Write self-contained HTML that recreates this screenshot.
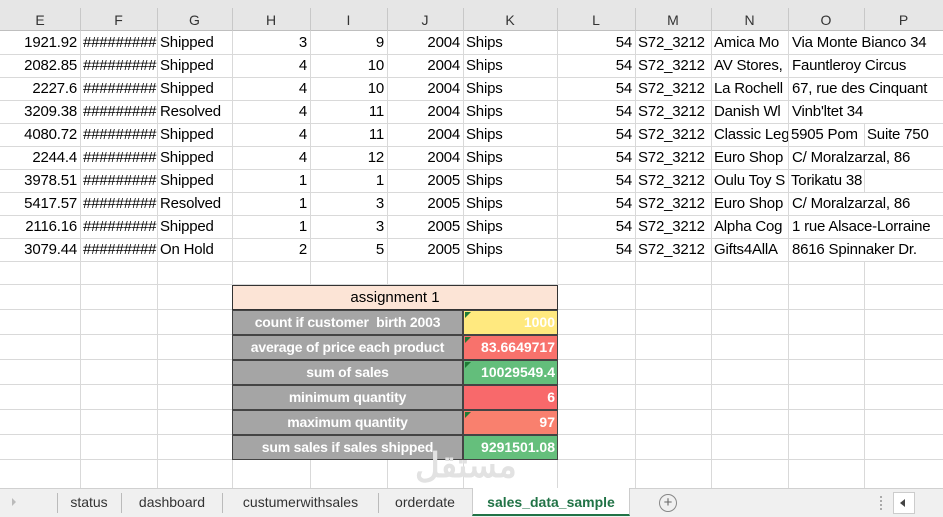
<!DOCTYPE html>
<html><head><meta charset="utf-8"><style>
*{margin:0;padding:0;box-sizing:border-box}
body{width:943px;height:517px;overflow:hidden;background:#fff;font-family:"Liberation Sans",sans-serif;position:relative}
.hdr{position:absolute;left:0;top:0;width:943px;height:31px;background:#e6e6e6;border-bottom:1px solid #bfbfbf}
.hl{position:absolute;left:0;width:943px;height:1px;background:#d9d9d9}
.vl{position:absolute;top:0;width:1px;height:488px;background:#d9d9d9}
.vh{position:absolute;top:8px;width:1px;height:23px;background:#c8c8c8}
.c{position:absolute;font-size:15px;color:#000;height:23px;line-height:24px;white-space:nowrap;overflow:hidden;letter-spacing:-0.2px}
.w{background:#fff}
.r{text-align:right;padding-right:3px}
.l{padding-left:3px}
.h{position:absolute;top:10px;font-size:14px;color:#333;text-align:center;height:20px;line-height:20px}
.lab{position:absolute;left:232px;width:231px;height:25px;background:#a5a5a5;border:1px solid #444;color:#fff;font-weight:bold;font-size:14px;text-align:center;line-height:23px;white-space:nowrap;overflow:hidden;letter-spacing:-0.2px}
.val{position:absolute;left:463px;width:95px;height:25px;border:1px solid #444;color:#fff;font-weight:bold;font-size:14px;text-align:right;padding-right:2px;line-height:23px;overflow:hidden}
.tri{position:absolute;left:1px;top:1px;width:0;height:0;border-top:6px solid #1e7b34;border-right:6px solid transparent}
.tab{position:absolute;top:490px;height:26px;line-height:24px;font-size:14px;color:#333;text-align:center}
</style></head><body>
<div class="hdr"></div>
<div class="h" style="left:0;width:80px">E</div>
<div class="h" style="left:80px;width:77px">F</div>
<div class="h" style="left:157px;width:75px">G</div>
<div class="h" style="left:232px;width:78px">H</div>
<div class="h" style="left:310px;width:77px">I</div>
<div class="h" style="left:387px;width:76px">J</div>
<div class="h" style="left:463px;width:94px">K</div>
<div class="h" style="left:557px;width:78px">L</div>
<div class="h" style="left:635px;width:76px">M</div>
<div class="h" style="left:711px;width:77px">N</div>
<div class="h" style="left:788px;width:76px">O</div>
<div class="h" style="left:864px;width:79px">P</div>
<div class="vh" style="left:80px"></div><div class="vh" style="left:157px"></div><div class="vh" style="left:232px"></div><div class="vh" style="left:310px"></div><div class="vh" style="left:387px"></div><div class="vh" style="left:463px"></div><div class="vh" style="left:557px"></div><div class="vh" style="left:635px"></div><div class="vh" style="left:711px"></div><div class="vh" style="left:788px"></div><div class="vh" style="left:864px"></div>

<div class="vl" style="left:80px;top:31px;height:457px"></div><div class="vl" style="left:157px;top:31px;height:457px"></div><div class="vl" style="left:232px;top:31px;height:457px"></div><div class="vl" style="left:310px;top:31px;height:457px"></div><div class="vl" style="left:387px;top:31px;height:457px"></div><div class="vl" style="left:463px;top:31px;height:457px"></div><div class="vl" style="left:557px;top:31px;height:457px"></div><div class="vl" style="left:635px;top:31px;height:457px"></div><div class="vl" style="left:711px;top:31px;height:457px"></div><div class="vl" style="left:788px;top:31px;height:457px"></div><div class="vl" style="left:864px;top:31px;height:457px"></div>

<div class="hl" style="top:54px"></div><div class="hl" style="top:77px"></div><div class="hl" style="top:100px"></div><div class="hl" style="top:123px"></div><div class="hl" style="top:146px"></div><div class="hl" style="top:169px"></div><div class="hl" style="top:192px"></div><div class="hl" style="top:215px"></div><div class="hl" style="top:238px"></div><div class="hl" style="top:261px"></div><div class="hl" style="top:284px"></div><div class="hl" style="top:309px"></div><div class="hl" style="top:334px"></div><div class="hl" style="top:359px"></div><div class="hl" style="top:384px"></div><div class="hl" style="top:409px"></div><div class="hl" style="top:434px"></div><div class="hl" style="top:459px"></div>

<div style="position:absolute;left:0;top:31px">
<div class="c r" style="left:0;top:0;width:80px">1921.92</div><div class="c l" style="left:80px;top:0;width:77px">#########</div><div class="c l" style="left:157px;top:0;width:75px">Shipped</div><div class="c r" style="left:232px;top:0;width:78px">3</div><div class="c r" style="left:310px;top:0;width:77px">9</div><div class="c r" style="left:387px;top:0;width:76px">2004</div><div class="c l" style="left:463px;top:0;width:94px">Ships</div><div class="c r" style="left:557px;top:0;width:78px">54</div><div class="c l" style="left:635px;top:0;width:76px">S72_3212</div><div class="c l" style="left:711px;top:0;width:77px">Amica Mo</div><div class="c l w" style="left:789px;top:0;width:154px;height:23px">Via Monte Bianco 34</div>

<div class="c r" style="left:0;top:23px;width:80px">2082.85</div><div class="c l" style="left:80px;top:23px;width:77px">#########</div><div class="c l" style="left:157px;top:23px;width:75px">Shipped</div><div class="c r" style="left:232px;top:23px;width:78px">4</div><div class="c r" style="left:310px;top:23px;width:77px">10</div><div class="c r" style="left:387px;top:23px;width:76px">2004</div><div class="c l" style="left:463px;top:23px;width:94px">Ships</div><div class="c r" style="left:557px;top:23px;width:78px">54</div><div class="c l" style="left:635px;top:23px;width:76px">S72_3212</div><div class="c l" style="left:711px;top:23px;width:77px">AV Stores,</div><div class="c l w" style="left:789px;top:24px;width:154px;height:22px;line-height:22px">Fauntleroy Circus</div>

<div class="c r" style="left:0;top:46px;width:80px">2227.6</div><div class="c l" style="left:80px;top:46px;width:77px">#########</div><div class="c l" style="left:157px;top:46px;width:75px">Shipped</div><div class="c r" style="left:232px;top:46px;width:78px">4</div><div class="c r" style="left:310px;top:46px;width:77px">10</div><div class="c r" style="left:387px;top:46px;width:76px">2004</div><div class="c l" style="left:463px;top:46px;width:94px">Ships</div><div class="c r" style="left:557px;top:46px;width:78px">54</div><div class="c l" style="left:635px;top:46px;width:76px">S72_3212</div><div class="c l" style="left:711px;top:46px;width:77px">La Rochell</div><div class="c l w" style="left:789px;top:47px;width:154px;height:22px;line-height:22px">67, rue des Cinquant</div>

<div class="c r" style="left:0;top:69px;width:80px">3209.38</div><div class="c l" style="left:80px;top:69px;width:77px">#########</div><div class="c l" style="left:157px;top:69px;width:75px">Resolved</div><div class="c r" style="left:232px;top:69px;width:78px">4</div><div class="c r" style="left:310px;top:69px;width:77px">11</div><div class="c r" style="left:387px;top:69px;width:76px">2004</div><div class="c l" style="left:463px;top:69px;width:94px">Ships</div><div class="c r" style="left:557px;top:69px;width:78px">54</div><div class="c l" style="left:635px;top:69px;width:76px">S72_3212</div><div class="c l" style="left:711px;top:69px;width:77px">Danish Wl</div><div class="c l w" style="left:789px;top:70px;width:154px;height:22px;line-height:22px">Vinb'ltet 34</div>

<div class="c r" style="left:0;top:92px;width:80px">4080.72</div><div class="c l" style="left:80px;top:92px;width:77px">#########</div><div class="c l" style="left:157px;top:92px;width:75px">Shipped</div><div class="c r" style="left:232px;top:92px;width:78px">4</div><div class="c r" style="left:310px;top:92px;width:77px">11</div><div class="c r" style="left:387px;top:92px;width:76px">2004</div><div class="c l" style="left:463px;top:92px;width:94px">Ships</div><div class="c r" style="left:557px;top:92px;width:78px">54</div><div class="c l" style="left:635px;top:92px;width:76px">S72_3212</div><div class="c l" style="left:711px;top:92px;width:77px">Classic Leg</div><div class="c l" style="left:788px;top:92px;width:76px">5905 Pom</div><div class="c l" style="left:864px;top:92px;width:79px">Suite 750</div>

<div class="c r" style="left:0;top:115px;width:80px">2244.4</div><div class="c l" style="left:80px;top:115px;width:77px">#########</div><div class="c l" style="left:157px;top:115px;width:75px">Shipped</div><div class="c r" style="left:232px;top:115px;width:78px">4</div><div class="c r" style="left:310px;top:115px;width:77px">12</div><div class="c r" style="left:387px;top:115px;width:76px">2004</div><div class="c l" style="left:463px;top:115px;width:94px">Ships</div><div class="c r" style="left:557px;top:115px;width:78px">54</div><div class="c l" style="left:635px;top:115px;width:76px">S72_3212</div><div class="c l" style="left:711px;top:115px;width:77px">Euro Shop</div><div class="c l w" style="left:789px;top:116px;width:154px;height:22px;line-height:22px">C/ Moralzarzal, 86</div>

<div class="c r" style="left:0;top:138px;width:80px">3978.51</div><div class="c l" style="left:80px;top:138px;width:77px">#########</div><div class="c l" style="left:157px;top:138px;width:75px">Shipped</div><div class="c r" style="left:232px;top:138px;width:78px">1</div><div class="c r" style="left:310px;top:138px;width:77px">1</div><div class="c r" style="left:387px;top:138px;width:76px">2005</div><div class="c l" style="left:463px;top:138px;width:94px">Ships</div><div class="c r" style="left:557px;top:138px;width:78px">54</div><div class="c l" style="left:635px;top:138px;width:76px">S72_3212</div><div class="c l" style="left:711px;top:138px;width:77px">Oulu Toy S</div><div class="c l" style="left:788px;top:138px;width:76px">Torikatu 38</div>

<div class="c r" style="left:0;top:161px;width:80px">5417.57</div><div class="c l" style="left:80px;top:161px;width:77px">#########</div><div class="c l" style="left:157px;top:161px;width:75px">Resolved</div><div class="c r" style="left:232px;top:161px;width:78px">1</div><div class="c r" style="left:310px;top:161px;width:77px">3</div><div class="c r" style="left:387px;top:161px;width:76px">2005</div><div class="c l" style="left:463px;top:161px;width:94px">Ships</div><div class="c r" style="left:557px;top:161px;width:78px">54</div><div class="c l" style="left:635px;top:161px;width:76px">S72_3212</div><div class="c l" style="left:711px;top:161px;width:77px">Euro Shop</div><div class="c l w" style="left:789px;top:162px;width:154px;height:22px;line-height:22px">C/ Moralzarzal, 86</div>

<div class="c r" style="left:0;top:184px;width:80px">2116.16</div><div class="c l" style="left:80px;top:184px;width:77px">#########</div><div class="c l" style="left:157px;top:184px;width:75px">Shipped</div><div class="c r" style="left:232px;top:184px;width:78px">1</div><div class="c r" style="left:310px;top:184px;width:77px">3</div><div class="c r" style="left:387px;top:184px;width:76px">2005</div><div class="c l" style="left:463px;top:184px;width:94px">Ships</div><div class="c r" style="left:557px;top:184px;width:78px">54</div><div class="c l" style="left:635px;top:184px;width:76px">S72_3212</div><div class="c l" style="left:711px;top:184px;width:77px">Alpha Cog</div><div class="c l w" style="left:789px;top:185px;width:154px;height:22px;line-height:22px">1 rue Alsace-Lorraine</div>

<div class="c r" style="left:0;top:207px;width:80px">3079.44</div><div class="c l" style="left:80px;top:207px;width:77px">#########</div><div class="c l" style="left:157px;top:207px;width:75px">On Hold</div><div class="c r" style="left:232px;top:207px;width:78px">2</div><div class="c r" style="left:310px;top:207px;width:77px">5</div><div class="c r" style="left:387px;top:207px;width:76px">2005</div><div class="c l" style="left:463px;top:207px;width:94px">Ships</div><div class="c r" style="left:557px;top:207px;width:78px">54</div><div class="c l" style="left:635px;top:207px;width:76px">S72_3212</div><div class="c l" style="left:711px;top:207px;width:77px">Gifts4AllA</div><div class="c l w" style="left:789px;top:208px;width:154px;height:22px;line-height:22px">8616 Spinnaker Dr.</div>
</div>

<div style="position:absolute;left:232px;top:285px;width:326px;height:25px;background:#fce4d6;border:1px solid #333;font-size:15px;text-align:center;line-height:23px;color:#000">assignment 1</div>
<div class="lab" style="top:310px">count if customer&nbsp; birth 2003</div>
<div class="val" style="top:310px;background:#ffe97f"><div class="tri"></div>1000</div>
<div class="lab" style="top:335px">average of price each product</div>
<div class="val" style="top:335px;background:#f8726c"><div class="tri"></div>83.6649717</div>
<div class="lab" style="top:360px">sum of sales</div>
<div class="val" style="top:360px;background:#63be7b"><div class="tri"></div>10029549.4</div>
<div class="lab" style="top:385px">minimum quantity</div>
<div class="val" style="top:385px;background:#f8696b">6</div>
<div class="lab" style="top:410px">maximum quantity</div>
<div class="val" style="top:410px;background:#f9806e"><div class="tri"></div>97</div>
<div class="lab" style="top:435px">sum sales if sales shipped</div>
<div class="val" style="top:435px;background:#65bf7c">9291501.08</div>

<div style="position:absolute;left:415px;top:446px;font-size:34px;font-weight:bold;color:#e2e2e2;font-family:'Liberation Sans','Noto Sans CJK SC',sans-serif">مستقل</div>

<div style="position:absolute;left:0;top:488px;width:943px;height:29px;background:#f0f0f0;border-top:1px solid #d0d0d0"></div>
<div style="position:absolute;left:12px;top:498px;width:0;height:0;border-left:4px solid #bbb;border-top:4px solid transparent;border-bottom:4px solid transparent"></div>
<div style="position:absolute;left:57px;top:493px;width:1px;height:20px;background:#bbb"></div>
<div class="tab" style="left:58px;width:62px">status</div>
<div style="position:absolute;left:121px;top:493px;width:1px;height:20px;background:#bbb"></div>
<div class="tab" style="left:122px;width:100px">dashboard</div>
<div style="position:absolute;left:222px;top:493px;width:1px;height:20px;background:#bbb"></div>
<div class="tab" style="left:223px;width:155px">custumerwithsales</div>
<div style="position:absolute;left:378px;top:493px;width:1px;height:20px;background:#bbb"></div>
<div class="tab" style="left:379px;width:92px">orderdate</div>
<div style="position:absolute;left:472px;top:488px;width:158px;height:28px;background:#fff;border-bottom:2px solid #217346;border-left:1px solid #ccc;border-right:1px solid #ccc"></div>
<div class="tab" style="left:472px;width:158px;color:#217346;font-weight:bold">sales_data_sample</div>
<div style="position:absolute;left:659px;top:494px;width:18px;height:18px;border:1px solid #888;border-radius:50%;text-align:center;line-height:15px;font-size:15px;color:#666">+</div>
<div style="position:absolute;left:880px;top:496px;width:2px;height:14px;border-left:2px dotted #aaa"></div>
<div style="position:absolute;left:893px;top:492px;width:22px;height:22px;background:#fff;border:1px solid #ccc"></div>
<div style="position:absolute;left:900px;top:499px;width:0;height:0;border-right:5px solid #444;border-top:4px solid transparent;border-bottom:4px solid transparent"></div>
</body></html>
